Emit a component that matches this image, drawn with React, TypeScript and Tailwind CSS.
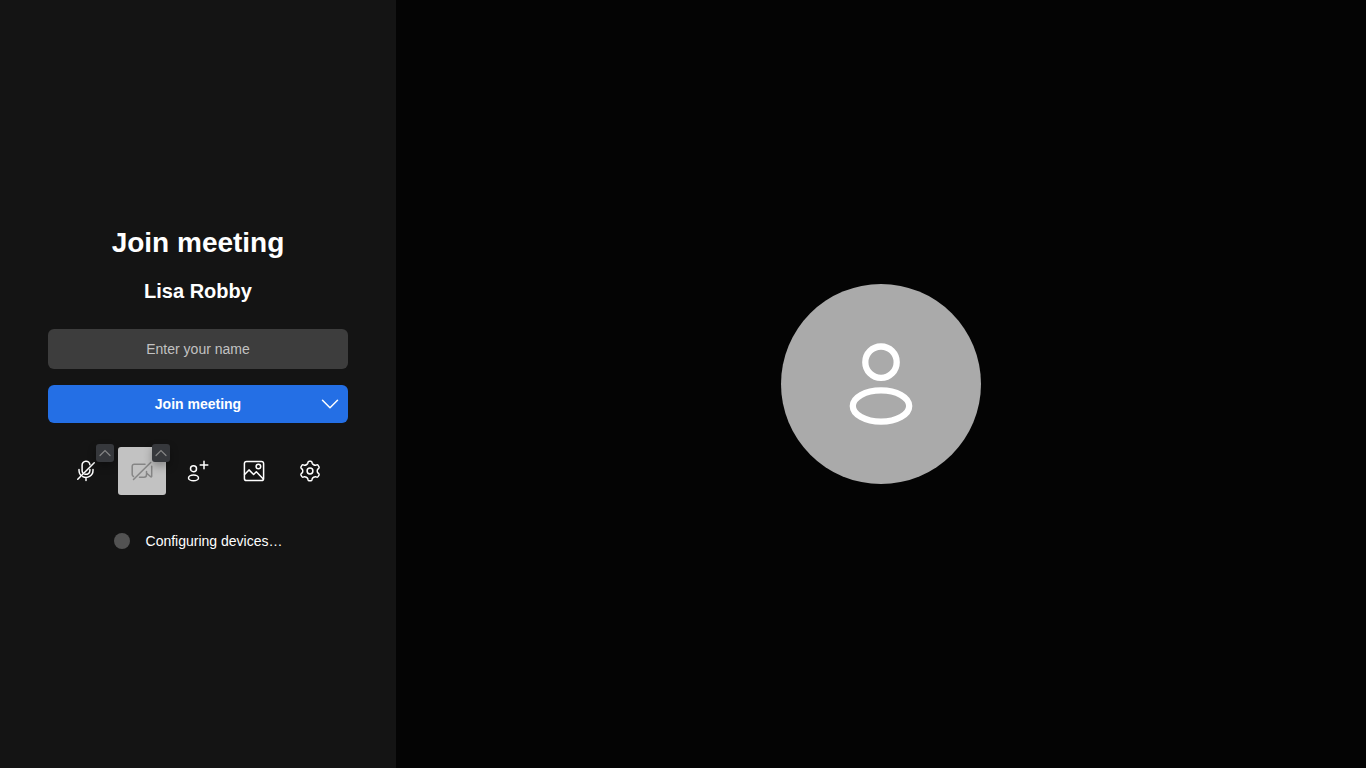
import type { ReactNode } from "react";

interface ToolButtonProps {
  label: string;
  disabled?: boolean;
  menuLabel?: string;
  children: ReactNode;
}

const ToolButton = ({ label, disabled, menuLabel, children }: ToolButtonProps) => (
  <div className="relative">
    <button
      type="button"
      aria-label={label}
      disabled={disabled}
      className={`flex size-12 items-center justify-center rounded-[3px] ${
        disabled ? "bg-[#c2c2c2] text-[#858585]" : "text-white"
      }`}
    >
      <svg
        viewBox="0 0 24 24"
        className="size-6"
        fill="none"
        stroke="currentColor"
        strokeWidth="1.5"
        strokeLinecap="round"
        strokeLinejoin="round"
      >
        {children}
      </svg>
    </button>
    {menuLabel && (
      <button
        type="button"
        aria-label={menuLabel}
        className="absolute -right-1 -top-[3px] flex size-[18px] items-center justify-center rounded-[3px] bg-[#36383c] text-[#858585] shadow-[0_4px_8px_rgba(0,0,0,0.3)]"
      >
        <svg viewBox="0 0 18 18" className="size-[18px]" fill="none" stroke="currentColor" strokeWidth="1.2" strokeLinecap="round">
          <path d="M4 11.5 9 6.5 14 11.5" />
        </svg>
      </button>
    )}
  </div>
);

const Toolbar = () => (
  <div className="mt-6 flex justify-center gap-2">
    <ToolButton label="Unmute microphone" menuLabel="Audio settings">
      <path d="M15.900 5.800A3.900 3.900 0 0 0 8.100 6.300v5.200c0 1 .3 1.900.9 2.600M10.800 15.200c2.700.7 5.100-1 5.100-3.700v-1" />
      <path d="M5 10.500v1c0 1.600.5 3.100 1.400 4.200M8.700 17.600c4.700 2.400 10.300-.8 10.300-6.100v-1M12 18.700v2.800M3.750 20.250l16.500-16.500" />
    </ToolButton>
    <ToolButton label="Start camera" disabled menuLabel="Video settings">
      <path d="M3.500 17.500A2 2 0 0 1 2.200 15.600V7.200a2 2 0 0 1 2-2H15M16.500 12.500v3.300a2.500 2.500 0 0 1-2.500 2.500H9.500M16.500 14l4.200 3.700c.4.400 1 .1 1-.5V7.200M3.500 20.500 20.700 3.500" />
    </ToolButton>
    <ToolButton label="Invite people">
      <circle cx="7.500" cy="9.700" r="3" />
      <ellipse cx="7.500" cy="18.900" rx="5" ry="2.900" />
      <path d="M18 2.200v7.600M14.200 6h7.600" />
    </ToolButton>
    <ToolButton label="Select background">
      <rect x="2.400" y="2.400" width="19.200" height="19.200" rx="2.200" />
      <circle cx="16.400" cy="7.500" r="2.300" />
      <path d="M2.600 15.500 7 10.900l4.600 4.600 2.700-2.700 7 7.300" />
    </ToolButton>
    <ToolButton label="Settings">
      <circle cx="12" cy="12" r="2.900" />
      <path d="M14.200 4.200C14.500 5.300 16.600 6.500 17.700 6.200L18.700 5.900Q19.700 5.600 20.200 6.500L21 7.900Q21.400 8.700 20.700 9.400L19.900 10.100C19 10.900 19 13.100 19.900 13.900L20.700 14.600Q21.400 15.300 21 16.100L20.200 17.500Q19.700 18.400 18.700 18.100L17.700 17.800C16.600 17.500 14.500 18.700 14.200 19.800L14 20.700Q13.700 21.700 12.800 21.700H11.200Q10.300 21.700 10 20.700L9.800 19.800C9.500 18.700 7.400 17.500 6.300 17.800L5.300 18.100Q4.300 18.400 3.800 17.500L3 16.100Q2.600 15.300 3.300 14.600L4.100 13.900C5 13.100 5 10.900 4.100 10.100L3.300 9.400Q2.600 8.700 3 7.900L3.800 6.500Q4.300 5.600 5.300 5.900L6.300 6.200C7.400 6.500 9.500 5.300 9.800 4.200L10 3.300Q10.300 2.300 11.200 2.300H12.800Q13.700 2.300 14 3.300Z" />
    </ToolButton>
  </div>
);

const App = () => (
  <div className="flex min-h-screen bg-[#040404] font-['Liberation_Sans',sans-serif] text-sm text-white">
    <main className="flex w-[396px] shrink-0 flex-col justify-center bg-[#141414] px-12">
      <h1 className="text-center text-[28px] font-bold leading-[48px]">Join meeting</h1>
      <h2 className="mb-6 mt-2.5 text-center text-xl font-bold leading-7">Lisa Robby</h2>
      <input
        type="text"
        aria-label="Enter your name"
        placeholder="Enter your name"
        className="h-10 w-full rounded-md bg-[#3d3d3d] px-4 text-center outline-none placeholder:text-[#c2c2c2]"
      />
      <div className="relative mt-4">
        <button type="button" className="h-[38px] w-full rounded-md bg-[#246fe5] text-center font-bold">
          Join meeting
        </button>
        <button type="button" aria-label="More join options" className="absolute inset-y-0 right-0 flex w-9 items-center justify-center">
          <svg viewBox="0 0 24 24" className="size-6" fill="none" stroke="currentColor" strokeWidth="1.5" strokeLinecap="round" strokeLinejoin="round">
            <path d="m4.500 8.200 7.500 7.500 7.500-7.500" />
          </svg>
        </button>
      </div>
      <Toolbar />
      <div role="status" className="mt-[38px] flex items-center justify-center gap-4 leading-4">
        <span className="size-4 rounded-full bg-[#525252]" />
        <span>Configuring devices…</span>
      </div>
    </main>
    <section aria-label="Video preview" className="flex flex-1 items-center justify-center">
      <div className="flex size-[200px] items-center justify-center rounded-full bg-[#aaaaaa]">
        <svg viewBox="0 0 100 100" className="size-[100px]" fill="none" stroke="white" strokeWidth="6.300">
          <circle cx="50" cy="28.200" r="15.700" />
          <ellipse cx="50" cy="72" rx="28.200" ry="15.700" />
        </svg>
      </div>
    </section>
  </div>
);

export default App;
